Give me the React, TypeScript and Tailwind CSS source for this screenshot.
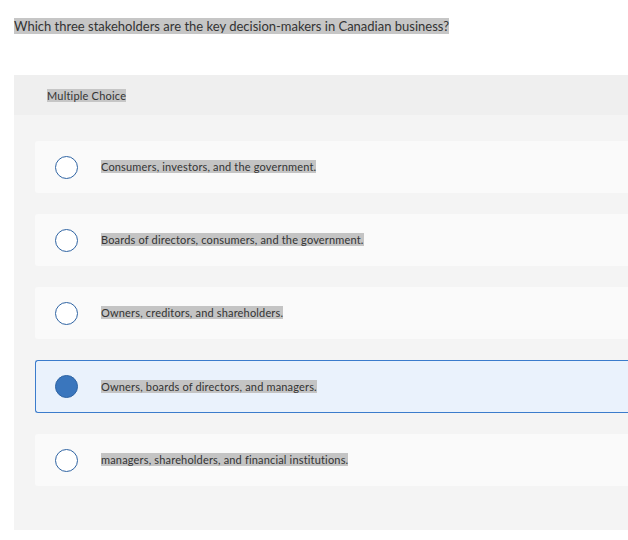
const options = [
  { text: 'Consumers, investors, and the government.', selected: false },
  { text: 'Boards of directors, consumers, and the government.', selected: false },
  { text: 'Owners, creditors, and shareholders.', selected: false },
  { text: 'Owners, boards of directors, and managers.', selected: true },
  { text: 'managers, shareholders, and financial institutions.', selected: false },
];

export default function App() {
  return (
    <main className="min-h-[540px] bg-white pl-[14px] pt-[18px] text-[#333] font-['Lato',sans-serif]">
      <p className="leading-4 text-[13px]">
        <span className="bg-[#c6c6c6]">Which three stakeholders are the key decision-makers in Canadian business?</span>
      </p>

      <section className="mt-[41px] bg-[#f4f4f4] pb-[44px]">
        <div className="flex h-10 items-center bg-[#efefef] pl-[33px] text-[11px]">
          <span className="bg-[#c6c6c6] leading-[13px] tracking-[0.2px] [font-variant-ligatures:none]">Multiple Choice</span>
        </div>

        <div className="flex flex-col gap-[21px] pl-[21px] pt-[26px]">
          {options.map((o) => (
            <div
              key={o.text}
              className={
                o.selected
                  ? 'flex h-[53px] items-center rounded-l-[3px] border border-r-0 border-[#3b7ccc] bg-[#eaf2fc] pl-[19px]'
                  : 'flex h-[52px] items-center rounded-l-[3px] bg-[#fafafa] pl-[20px]'
              }
            >
              {o.selected ? (
                <span className="h-[23px] w-[23px] shrink-0 rounded-full border border-[#2f64a3] bg-[#3a76bd]" />
              ) : (
                <span className="h-[23px] w-[23px] shrink-0 rounded-full border-[1.5px] border-[#2f64a3] bg-white" />
              )}
              <span className="ml-[23px] -mt-px bg-[#c4c4c4] text-[11px] leading-[13px] tracking-[0.17px] [font-variant-ligatures:none]">
                {o.text}
              </span>
            </div>
          ))}
        </div>
      </section>
    </main>
  );
}
